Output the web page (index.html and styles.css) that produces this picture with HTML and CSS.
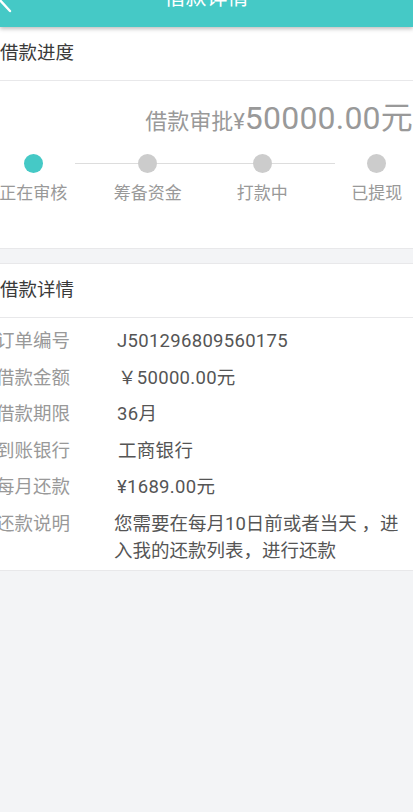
FILE: index.html
```html
<!DOCTYPE html>
<html>

<head>
    <meta charset="utf-8">
    <link rel="stylesheet" href="styles.css">
</head>

<body>
    <div class="header">
        <svg class="back" width="20" height="30" viewBox="0 0 20 30">
            <polyline points="16,2 4,15 16,28" fill="none" stroke="white" stroke-width="2.4" stroke-linecap="round" stroke-linejoin="round" />
        </svg>
        <h1>借款详情</h1>
    </div>

    <div class="card">
        <div class="card-title">借款进度</div>
        <div class="amount">借款审批¥<span class="amount-big">50000.00元</span></div>
        <div class="steps">
            <div class="steps-line"></div>
            <div class="step active">
                <div class="step-dot"></div>
                <div class="step-label">正在审核</div>
            </div>
            <div class="step">
                <div class="step-dot"></div>
                <div class="step-label">筹备资金</div>
            </div>
            <div class="step">
                <div class="step-dot"></div>
                <div class="step-label">打款中</div>
            </div>
            <div class="step">
                <div class="step-dot"></div>
                <div class="step-label">已提现</div>
            </div>
        </div>
    </div>

    <div class="card">
        <div class="card-title">借款详情</div>
        <div class="detail-list">
            <div class="detail-item">
                <span class="detail-label">订单编号</span>
                <span class="detail-value">J501296809560175</span>
            </div>
            <div class="detail-item">
                <span class="detail-label">借款金额</span>
                <span class="detail-value shift">￥50000.00元</span>
            </div>
            <div class="detail-item">
                <span class="detail-label">借款期限</span>
                <span class="detail-value">36月</span>
            </div>
            <div class="detail-item">
                <span class="detail-label">到账银行</span>
                <span class="detail-value shift">工商银行</span>
            </div>
            <div class="detail-item">
                <span class="detail-label">每月还款</span>
                <span class="detail-value">¥1689.00元</span>
            </div>
            <div class="detail-item">
                <span class="detail-label">还款说明</span>
                <span class="detail-value note">您需要在每月10日前或者当天 ，进入我的还款列表，进行还款</span>
            </div>
        </div>
    </div>
</body>

</html>
```

FILE: styles.css
```css
body {
    margin: 0;
    width: 413px;
    height: 812px;
    overflow: hidden;
    font-family: Roboto, 'Noto Sans CJK SC', sans-serif;
    background: #f3f4f6;
    color: #333;
}

.header {
    position: relative;
    margin-top: -29px;
    height: 56px;
    background: #45c9c6;
    box-shadow: 0 2px 4px rgba(0, 0, 0, 0.25);
    z-index: 1;
}

.header h1 {
    margin: 0;
    text-align: center;
    font-size: 21px;
    font-weight: 400;
    line-height: 52px;
    color: white;
}

.back {
    position: absolute;
    left: -6px;
    top: 12px;
}

.card {
    background: white;
    border-bottom: 1px solid #e8e8ea;
    margin-bottom: 14px;
}

.card + .card {
    border-top: 1px solid #e8e8ea;
}

.card-title {
    height: 53px;
    line-height: 53px;
    font-size: 18.5px;
    color: #3a3a3a;
    border-bottom: 1px solid #e8e8ea;
}

.amount {
    text-align: right;
    margin-top: 21px;
    font-size: 22px;
    line-height: 32px;
    color: #999;
}

.amount-big {
    font-size: 32px;
    letter-spacing: 0.2px;
}

.steps {
    position: relative;
    display: flex;
    margin: 13px 0 0 -24px;
    width: 458px;
    padding-bottom: 43px;
}

.steps-line {
    position: absolute;
    left: 99px;
    top: 12px;
    width: 260px;
    height: 1px;
    background: #dddddd;
}

.step {
    position: relative;
    width: 114.5px;
    display: flex;
    flex-direction: column;
    align-items: center;
}

.step-dot {
    width: 19px;
    height: 19px;
    margin-top: 3px;
    border-radius: 50%;
    background: #cccccc;
}

.step.active .step-dot {
    background: #45c9c6;
}

.step-label {
    margin-top: 8px;
    font-size: 17px;
    line-height: 24px;
    color: #999;
}

.detail-list {
    margin-left: -4px;
    padding: 10px 0 5px 0;
}

.detail-item {
    display: flex;
    font-size: 18.5px;
    line-height: 27px;
    margin-bottom: 9.6px;
}

.detail-item:last-child {
    margin-bottom: 0;
}

.detail-label {
    width: 120px;
    flex-shrink: 0;
    color: #999;
}

.detail-value {
    color: #555;
    padding-left: 1px;
    letter-spacing: 0.3px;
}

.detail-value.shift {
    padding-left: 2px;
}

.detail-value.note {
    margin-left: -2px;
    padding-left: 0;
    padding-right: 8px;
    letter-spacing: 0;
}
```
